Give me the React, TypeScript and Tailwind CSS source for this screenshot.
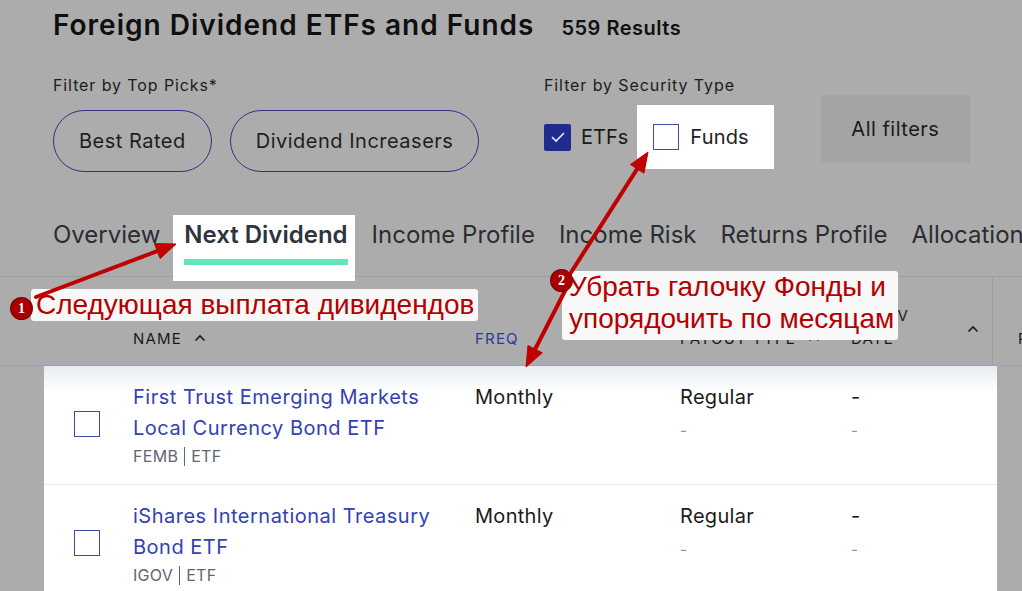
import React from "react";

type Pt = [number, number];

const tabs = ["Overview", "Next Dividend", "Income Profile", "Income Risk", "Returns Profile", "Allocation"];

const rows = [
  { name: "First Trust Emerging Markets Local Currency Bond ETF", ticker: "FEMB", type: "ETF" },
  { name: "iShares International Treasury Bond ETF", ticker: "IGOV", type: "ETF" },
];

// red callout arrows, from badge to target
const arrows: [Pt, Pt][] = [
  [[36, 297], [176, 244]],
  [[570, 274], [648, 152]],
  [[569, 283], [526, 367]],
];

function arrowShape(from: Pt, to: Pt, head = 20, half = 8) {
  const dx = to[0] - from[0];
  const dy = to[1] - from[1];
  const len = Math.hypot(dx, dy);
  const ux = dx / len;
  const uy = dy / len;
  const bx = to[0] - ux * head;
  const by = to[1] - uy * head;
  const px = -uy * half;
  const py = ux * half;
  return {
    end: [bx + ux * 2, by + uy * 2] as Pt,
    points: `${to[0]},${to[1]} ${bx + px},${by + py} ${bx - px},${by - py}`,
  };
}

function Chevron({ className = "" }: { className?: string }) {
  return (
    <svg width="12" height="8" viewBox="0 0 12 8" className={`shrink-0 ${className}`}>
      <polyline points="1.5,6.5 6,2 10.5,6.5" fill="none" stroke="currentColor" strokeWidth="1.6" />
    </svg>
  );
}

function Badge({ n, className }: { n: string; className: string }) {
  return (
    <div
      className={`absolute flex h-[21px] w-[21px] items-center justify-center rounded-full bg-[#a80000] font-['Liberation_Serif',serif] text-[14px] font-bold text-white ring-1 ring-[#7a0000] ${className}`}
    >
      {n}
    </div>
  );
}

export default function App() {
  return (
    <div className="relative h-[591px] w-full overflow-hidden bg-[#acacac] font-['Inter',sans-serif]">
      <div className="pl-[53px]">
        <div className="flex h-[52px] items-baseline gap-[27px] pt-[8px]">
          <h1 className="text-[28px] font-semibold leading-[34px] tracking-[1px] text-[#0f0f0f]">Foreign Dividend ETFs and Funds</h1>
          <span className="text-[20px] font-semibold tracking-[0.5px] text-[#111]">559 Results</span>
        </div>

        <div className="mt-[23px] flex items-start">
          <div className="w-[491px] shrink-0">
            <div className="text-[16px] leading-[20px] tracking-[0.9px] text-[#1c1c1c]">Filter by Top Picks*</div>
            <div className="mt-[15px] flex gap-[18px]">
              <button className="h-[62px] rounded-full border-[1.5px] border-[#2b3288] px-[25px] text-[20px] tracking-[0.5px] text-[#1e1e1e]">Best Rated</button>
              <button className="h-[62px] rounded-full border-[1.5px] border-[#2b3288] px-[25px] text-[20px] tracking-[0.5px] text-[#1e1e1e]">Dividend Increasers</button>
            </div>
          </div>

          <div className="shrink-0">
            <div className="text-[16px] leading-[20px] tracking-[0.9px] text-[#1c1c1c]">Filter by Security Type</div>
            <div className="mt-[10px] flex h-[64px] items-center">
              <span className="flex h-[27px] w-[27px] items-center justify-center rounded-[2px] bg-[#1f2b8e]">
                <svg width="16" height="12" viewBox="0 0 16 12">
                  <polyline points="2,6 6,10 14,2" fill="none" stroke="#e6e8f5" strokeWidth="1.6" />
                </svg>
              </span>
              <span className="ml-[10px] text-[20px] text-[#1a1a1a]">ETFs</span>
              <div className="ml-[9px] flex h-full items-center bg-white pl-[16px] pr-[25px]">
                <span className="h-[26px] w-[26px] border border-[#4450a6]" />
                <span className="ml-[11px] text-[20px] tracking-[0.2px] text-[#222]">Funds</span>
              </div>
            </div>
          </div>

          <div className="ml-[47px] mt-[20px] flex h-[68px] w-[149px] shrink-0 items-center justify-center bg-[#a4a4a5] text-[20px] tracking-[0.5px] text-[#1a1a1a]">
            All filters
          </div>
        </div>
      </div>

      <div className="mt-[43px] flex h-[62px] items-start gap-[24px] whitespace-nowrap border-b border-[#9d9d9d] pl-[53px]">
        {tabs.map((t) =>
          t === "Next Dividend" ? (
            <div key={t} className="-ml-[11px] -mr-[7px] h-[66px] shrink-0 bg-white pl-[11px] pr-[7px] pt-[6px]">
              <div className="text-[24px] font-semibold leading-[28px] text-[#2d3440]">{t}</div>
              <div className="mt-[10px] h-[6px] bg-[#63e6b8]" />
            </div>
          ) : (
            <div key={t} className="shrink-0 pt-[6px] text-[24px] leading-[28px] text-[#2a2d33]">
              {t}
            </div>
          )
        )}
      </div>

      <div className="flex h-[89px] border-b border-[#9aa3b6] text-[15px] uppercase leading-[23px] tracking-[1.2px] text-[#1a1a1a]">
        <div className="w-[133px] shrink-0" />
        <div className="flex w-[342px] shrink-0 items-end pb-[15px]">
          NAME
          <Chevron className="mb-[8px] ml-[12px]" />
        </div>
        <div className="flex w-[205px] shrink-0 items-end pb-[15px] text-[#2b3a9c]">FREQ</div>
        <div className="flex w-[171px] shrink-0 items-end pb-[15px]">
          PAYOUT TYPE
          <Chevron className="mb-[8px] ml-[12px]" />
        </div>
        <div className="flex w-[141px] shrink-0 items-end justify-between pb-[15px] pr-[13px]">
          <div>
            EX-DIV
            <br />
            DATE
          </div>
          <Chevron className="mb-[17px]" />
        </div>
        <div className="mt-[1px] flex shrink-0 items-end border-l border-[#9c9c9c] pb-[15px] pl-[25px]">RECORD</div>
      </div>

      <div className="ml-[44px] w-[953px] bg-white">
        {rows.map((r, i) => (
          <div
            key={r.ticker}
            className={`flex items-start border-b border-[#ebebeb] pb-[18px] pt-[16px] ${i === 0 ? "bg-[linear-gradient(to_bottom,#e8ecf2,#ffffff_26px)]" : ""}`}
          >
            <span className="ml-[30px] h-[26px] w-[26px] shrink-0 self-center border border-[#3d4a9e]" />
            <div className="ml-[33px] w-[342px] shrink-0">
              <div className="w-[315px] text-[20px] leading-[31px] tracking-[0.5px] text-[#3341b5]">{r.name}</div>
              <div className="mt-[2px] flex items-center text-[16px] leading-[20px] tracking-[0.3px] text-[#5f6672]">
                {r.ticker}
                <span className="mx-[6px] inline-block h-[19px] w-px bg-[#5f6672]" />
                {r.type}
              </div>
            </div>
            <div className="w-[205px] shrink-0 text-[20px] leading-[31px] tracking-[0.3px] text-[#1b1b1b]">Monthly</div>
            <div className="w-[171px] shrink-0">
              <div className="text-[20px] leading-[31px] tracking-[0.3px] text-[#1b1b1b]">Regular</div>
              <div className="mt-[8px] text-[15px] leading-[20px] text-[#8a92a0]">-</div>
            </div>
            <div>
              <div className="text-[20px] leading-[31px] text-[#1b1b1b]">-</div>
              <div className="mt-[8px] text-[15px] leading-[20px] text-[#8a92a0]">-</div>
            </div>
          </div>
        ))}
      </div>

      {/* annotations */}
      <div className="absolute left-[31px] top-[289px] h-[32px] w-[447px] rounded-[3px] bg-[#f8f8f8] pl-[5px] font-['Liberation_Sans',Arial,sans-serif] text-[28px] leading-[32px] text-[#b40000]">
        Следующая выплата дивидендов
      </div>
      <div className="absolute left-[562px] top-[271px] h-[69px] w-[336px] rounded-[3px] bg-[#f8f8f8] pl-[7px] font-['Liberation_Sans',Arial,sans-serif] text-[28px] leading-[32px] text-[#b40000]">
        Убрать галочку Фонды и
        <br />
        упорядочить по месяцам
      </div>

      <svg className="pointer-events-none absolute left-0 top-0" width="1022" height="591">
        {arrows.map(([a, b], i) => {
          const s = arrowShape(a, b);
          return (
            <g key={i} fill="#c00000" stroke="#c00000">
              <line x1={a[0]} y1={a[1]} x2={s.end[0]} y2={s.end[1]} strokeWidth="4" strokeLinecap="round" />
              <polygon points={s.points} strokeWidth="1" strokeLinejoin="round" />
            </g>
          );
        })}
      </svg>

      <Badge n="1" className="left-[11px] top-[298px]" />
      <Badge n="2" className="left-[551px] top-[270px]" />
    </div>
  );
}
